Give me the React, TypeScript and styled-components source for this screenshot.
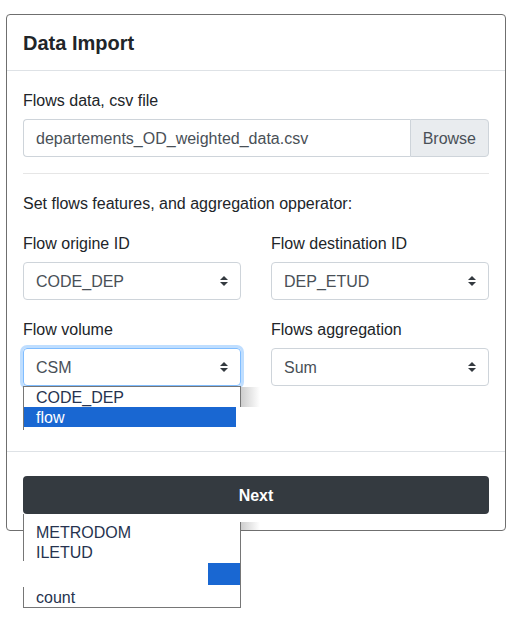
import styled, { createGlobalStyle } from 'styled-components';

const GlobalStyle = createGlobalStyle`
    html, body {
        margin: 0;
        padding: 0;
        background: #ffffff;
    }
    body {
        font-family: "Liberation Sans", Arial, sans-serif;
        font-size: 16px;
        color: #212529;
    }
    * {
        box-sizing: border-box;
    }
`;

const Page = styled.div`
    position: relative;
    width: 530px;
    height: 620px;
    overflow: hidden;
    padding: 14px 0 0 6px;
`;

const Modal = styled.div`
    width: 500px;
    border: 1px solid #6f6f6f;
    border-radius: 4px;
    background: #ffffff;
`;

const Header = styled.div`
    height: 56px;
    display: flex;
    align-items: center;
    padding: 0 16px 0;
    border-bottom: 1px solid #dee2e6;
`;

const Title = styled.h5`
    margin: 0;
    font-size: 20px;
    font-weight: 700;
    line-height: 24px;
    color: #212529;
`;

const Body = styled.div`
    padding: 16px 16px 65px;
`;

const Group = styled.div<{ last?: boolean }>`
    margin-bottom: ${(p) => (p.last ? "0" : "16px")};
`;

const Label = styled.label`
    display: block;
    line-height: 24px;
    padding-top: 2px;
    margin-bottom: 6px;
    color: #212529;
`;

const FileInput = styled.div`
    display: flex;
    height: 38px;
`;

const FileName = styled.div`
    flex: 1;
    display: flex;
    align-items: center;
    padding: 2px 12px 0;
    border: 1px solid #ced4da;
    border-right: none;
    border-radius: 4px 0 0 4px;
    color: #495057;
`;

const BrowseBtn = styled.div`
    display: flex;
    align-items: center;
    padding: 2px 12px 0;
    background: #e9ecef;
    border: 1px solid #ced4da;
    border-radius: 0 4px 4px 0;
    color: #495057;
`;

const Divider = styled.hr`
    margin: 16px 0;
    border: 0;
    border-top: 1px solid #e6e6e6;
`;

const Lead = styled.p`
    margin: 0 0 14px;
    padding-top: 2px;
    line-height: 24px;
`;

const Row = styled.div`
    display: grid;
    grid-template-columns: 1fr 1fr;
    column-gap: 30px;
`;

const Select = styled.div<{ focused?: boolean }>`
    height: 38px;
    display: flex;
    align-items: center;
    justify-content: space-between;
    padding: 2px 12px 0;
    border: 1px solid ${(p) => (p.focused ? "#80bdff" : "#ced4da")};
    border-radius: 4px;
    color: #495057;
    box-shadow: ${(p) => (p.focused ? "0 0 0 3px rgba(0, 123, 255, 0.25)" : "none")};

    svg {
        margin-top: -2px;
    }
`;

const Footer = styled.div`
    border-top: 1px solid #dee2e6;
    padding: 24px 16px 16px;
`;

const NextButton = styled.button`
    width: 100%;
    height: 38px;
    padding-top: 2px;
    border: none;
    border-radius: 4px;
    background: #343a40;
    color: #ffffff;
    font-family: inherit;
    font-size: 16px;
    font-weight: 700;
`;

// native select popup, painted in two broken pieces over the modal
const Popup = styled.div<{ top: number; height: number }>`
    position: absolute;
    left: 23px;
    top: ${(p) => p.top}px;
    width: 218px;
    height: ${(p) => p.height}px;
    background: #ffffff;
`;

const Edge = styled.div<{ side: "left" | "right" | "top" | "bottom"; from?: number; size?: number }>`
    position: absolute;
    background: #767676;
    ${(p) =>
        p.side === "left" || p.side === "right"
            ? `${p.side}: 0; top: ${p.from ?? 0}px; width: 1px; height: ${p.size}px;`
            : `${p.side}: 0; left: 0; height: 1px; width: 100%;`}
`;

const Option = styled.div<{ h?: number; selected?: boolean }>`
    position: relative;
    height: ${(p) => p.h ?? 20}px;
    line-height: 20px;
    padding: 1px 0 0 12px;
    margin-left: 1px;
    width: ${(p) => (p.selected ? "212px" : "216px")};
    background: ${(p) => (p.selected ? "#1967d2" : "transparent")};
    color: ${(p) => (p.selected ? "#ffffff" : "#26334f")};
    white-space: nowrap;
`;

const Spacer = styled.div<{ h: number }>`
    height: ${(p) => p.h}px;
`;

const StrayHighlight = styled.div`
    position: absolute;
    left: 184px;
    top: 1px;
    width: 32px;
    height: 22px;
    background: #1967d2;
`;

const Shadow = styled.div<{ top: number; height: number }>`
    position: absolute;
    left: 241px;
    top: ${(p) => p.top}px;
    width: 19px;
    height: ${(p) => p.height}px;
    background: linear-gradient(to right, #cdcdcd, rgba(255, 255, 255, 0));
`;

const Arrows = () => (
    <svg width="8" height="10" viewBox="0 0 4 5">
        <path fill="#343a40" d="M2 0L0 2h4zm0 5L0 3h4z" />
    </svg>
);

const App = () => {
    return (
        <>
            <GlobalStyle />
            <Page>
                <Modal>
                    <Header>
                        <Title>Data Import</Title>
                    </Header>
                    <Body>
                        <Label>Flows data, csv file</Label>
                        <FileInput>
                            <FileName>departements_OD_weighted_data.csv</FileName>
                            <BrowseBtn>Browse</BrowseBtn>
                        </FileInput>
                        <Divider />
                        <Lead>Set flows features, and aggregation opperator:</Lead>
                        <Row>
                            <Group>
                                <Label>Flow origine ID</Label>
                                <Select>CODE_DEP<Arrows /></Select>
                            </Group>
                            <Group>
                                <Label>Flow destination ID</Label>
                                <Select>DEP_ETUD<Arrows /></Select>
                            </Group>
                            <Group last>
                                <Label>Flow volume</Label>
                                <Select focused>CSM<Arrows /></Select>
                            </Group>
                            <Group last>
                                <Label>Flows aggregation</Label>
                                <Select>Sum<Arrows /></Select>
                            </Group>
                        </Row>
                    </Body>
                    <Footer>
                        <NextButton>Next</NextButton>
                    </Footer>
                </Modal>

                <Popup top={386} height={44}>
                    <Edge side="top" />
                    <Edge side="left" from={0} size={44} />
                    <Edge side="right" from={0} size={21} />
                    <Spacer h={1} />
                    <Option>CODE_DEP</Option>
                    <Option selected>flow</Option>
                </Popup>
                <Shadow top={387} height={20} />

                <Popup top={514} height={94}>
                    <Edge side="left" from={0} size={47} />
                    <Edge side="left" from={73} size={21} />
                    <Edge side="right" from={8} size={86} />
                    <Edge side="bottom" />
                    <Spacer h={8} />
                    <Option>METRODOM</Option>
                    <Option>ILETUD</Option>
                    <Option h={25}>
                        <StrayHighlight />
                    </Option>
                    <Option>count</Option>
                </Popup>
                <Shadow top={522} height={8} />
            </Page>
        </>
    );
};

export default App;
